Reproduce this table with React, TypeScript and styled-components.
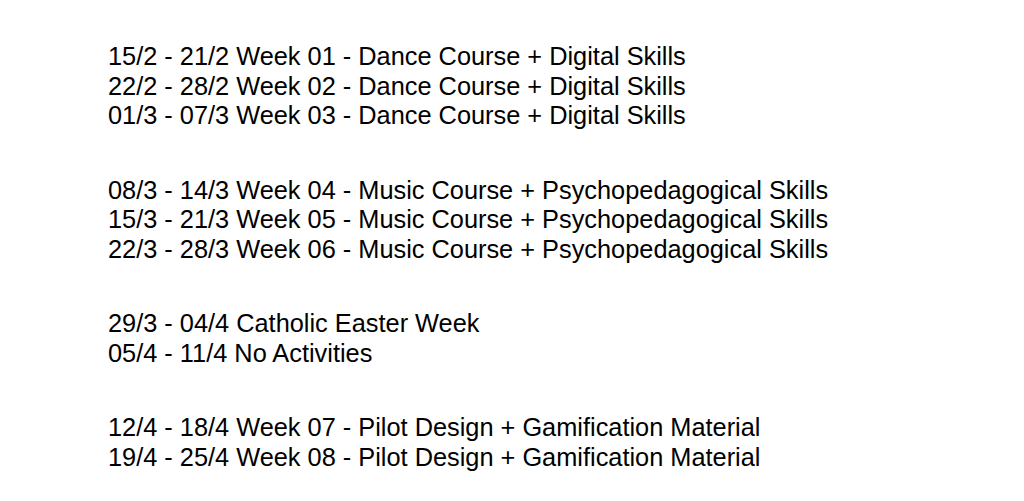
import React from "react";
import styled, { createGlobalStyle } from "styled-components";

const GlobalStyle = createGlobalStyle`
  html, body {
    margin: 0;
    padding: 0;
    background: #ffffff;
  }
`;

const groups: string[][] = [
  [
    "15/2 - 21/2 Week 01 - Dance Course + Digital Skills",
    "22/2 - 28/2 Week 02 - Dance Course + Digital Skills",
    "01/3 - 07/3 Week 03 - Dance Course + Digital Skills",
  ],
  [
    "08/3 - 14/3 Week 04 - Music Course + Psychopedagogical Skills",
    "15/3 - 21/3 Week 05 - Music Course + Psychopedagogical Skills",
    "22/3 - 28/3 Week 06 - Music Course + Psychopedagogical Skills",
  ],
  ["29/3 - 04/4 Catholic Easter Week", "05/4 - 11/4 No Activities"],
  [
    "12/4 - 18/4 Week 07 - Pilot Design + Gamification Material",
    "19/4 - 25/4 Week 08 - Pilot Design + Gamification Material",
  ],
];

const App: React.FC = () => {
  return (
    <>
      <GlobalStyle />
      <Page>
        {groups.map((group, i) => (
          <Group key={i}>
            {group.map((line) => (
              <Line key={line}>{line}</Line>
            ))}
          </Group>
        ))}
      </Page>
    </>
  );
};

export default App;

const Page = styled.div`
  width: 1024px;
  height: 501px;
  box-sizing: border-box;
  padding: 42px 0 0 108px;
  display: flex;
  flex-direction: column;
  gap: 44.5px;
  background: #fff;
  font-family: "Liberation Sans", Arial, sans-serif;
  color: #000;
`;

const Group = styled.div`
  display: flex;
  flex-direction: column;
`;

const Line = styled.div`
  font-size: 25.35px;
  line-height: 29.7px;
  white-space: nowrap;
`;
